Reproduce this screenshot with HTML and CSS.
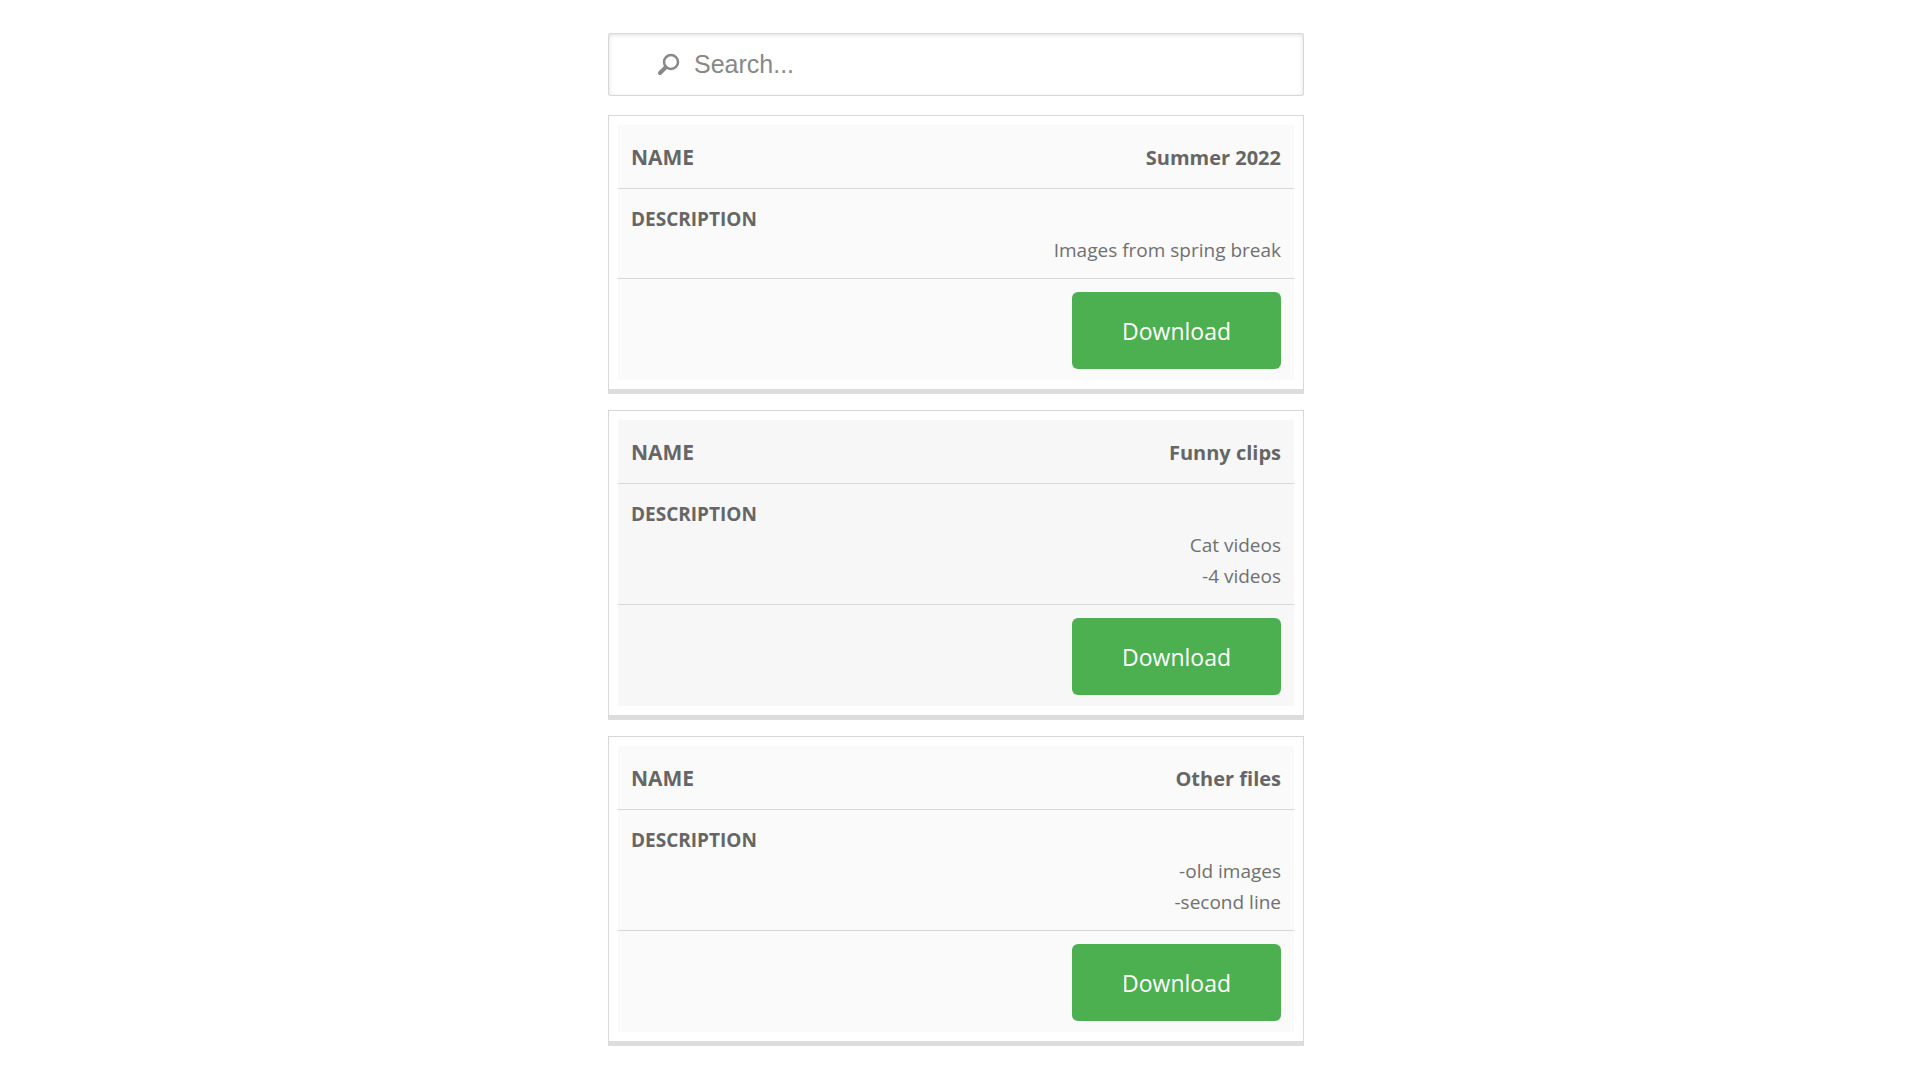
FILE: index.html
```html
<!DOCTYPE html>
<html lang="en">
<head>
  <meta charset="utf-8">
  <meta name="viewport" content="width=device-width, initial-scale=1">
  <title>Downloads</title>
  <link rel="stylesheet" href="styles.css">
</head>
<body>
  <main class="page">
    <label class="search">
      <svg class="search-icon" viewBox="0 0 24 24" aria-hidden="true">
        <circle cx="15" cy="9" r="7"/>
        <path d="M9.500 14.500L4 20"/>
      </svg>
      <input class="search-input" type="text" placeholder="Search..." aria-label="Search">
    </label>
    <table class="files">
      <tbody>
        <tr class="card">
          <td class="cell name"><span class="label">NAME</span><span class="value">Summer 2022</span></td>
          <td class="cell description"><span class="label">DESCRIPTION</span><span class="value">Images from spring break</span></td>
          <td class="cell action"><button class="download" type="button">Download</button></td>
        </tr>
        <tr class="card">
          <td class="cell name"><span class="label">NAME</span><span class="value">Funny clips</span></td>
          <td class="cell description"><span class="label">DESCRIPTION</span><span class="value">Cat videos<br>-4 videos</span></td>
          <td class="cell action"><button class="download" type="button">Download</button></td>
        </tr>
        <tr class="card">
          <td class="cell name"><span class="label">NAME</span><span class="value">Other files</span></td>
          <td class="cell description"><span class="label">DESCRIPTION</span><span class="value">-old images<br>-second line</span></td>
          <td class="cell action"><button class="download" type="button">Download</button></td>
        </tr>
      </tbody>
    </table>
  </main>
</body>
</html>
```
FILE: styles.css
```css
* {
  box-sizing: border-box;
}

body {
  margin: 0;
  padding: 33px 8px 33px 0;
  background: #fff;
  color: #666;
  font-family: "Open Sans", "Noto Sans", sans-serif;
  font-size: 19px;
  line-height: 31px;
}

.page {
  display: flex;
  flex-direction: column;
  gap: 19px;
  width: 100%;
  max-width: 696px;
  margin: 0 auto;
}

.search {
  display: flex;
  align-items: center;
  gap: 14px;
  padding: 0 47px;
  border: 1px solid #d8d8d8;
  border-radius: 2px;
  box-shadow: inset 0 1px 4px #ddd;
}

.search-icon {
  flex: none;
  width: 24px;
  height: 24px;
  fill: none;
  stroke: #888;
  stroke-width: 2.500;
}

.search-icon path {
  stroke-width: 4;
  stroke-linecap: round;
}

.search-input {
  flex: 1;
  min-width: 0;
  padding: 15px 0;
  border: 0;
  outline: 0;
  background: transparent;
  color: #555;
  font: 25px/31px "Liberation Sans", Arial, sans-serif;
}

.search-input::placeholder {
  color: #888;
  opacity: 1;
}

.files,
.files tbody {
  display: flex;
  flex-direction: column;
  gap: 16px;
}

.card {
  display: block;
  padding: 9px;
  border: 1px solid #d8d8d8;
  border-bottom: 5px solid #ddd;
}

.cell {
  display: flex;
  padding: 15px 13px 12px;
  background: #fafafa;
  border-bottom: 1px solid #d8d8d8;
}

.card:nth-child(even) .cell {
  background: #f7f7f7;
}

.label {
  font-weight: 700;
}

.name {
  justify-content: space-between;
  padding: 17px 13px 15px;
  font-size: 20px;
  font-weight: 700;
}

.name .label {
  font-size: 21px;
}

.description {
  flex-direction: column;
}

.description .value {
  color: #707070;
  text-align: right;
}

.action {
  justify-content: flex-end;
  padding: 13px 13px 11px;
  border-bottom: 0;
}

.download {
  padding: 24px 50px 22px;
  border: 0;
  border-radius: 6px;
  background: #4caf50;
  color: #fff;
  font: inherit;
  font-size: 23px;
  cursor: pointer;
}
```
